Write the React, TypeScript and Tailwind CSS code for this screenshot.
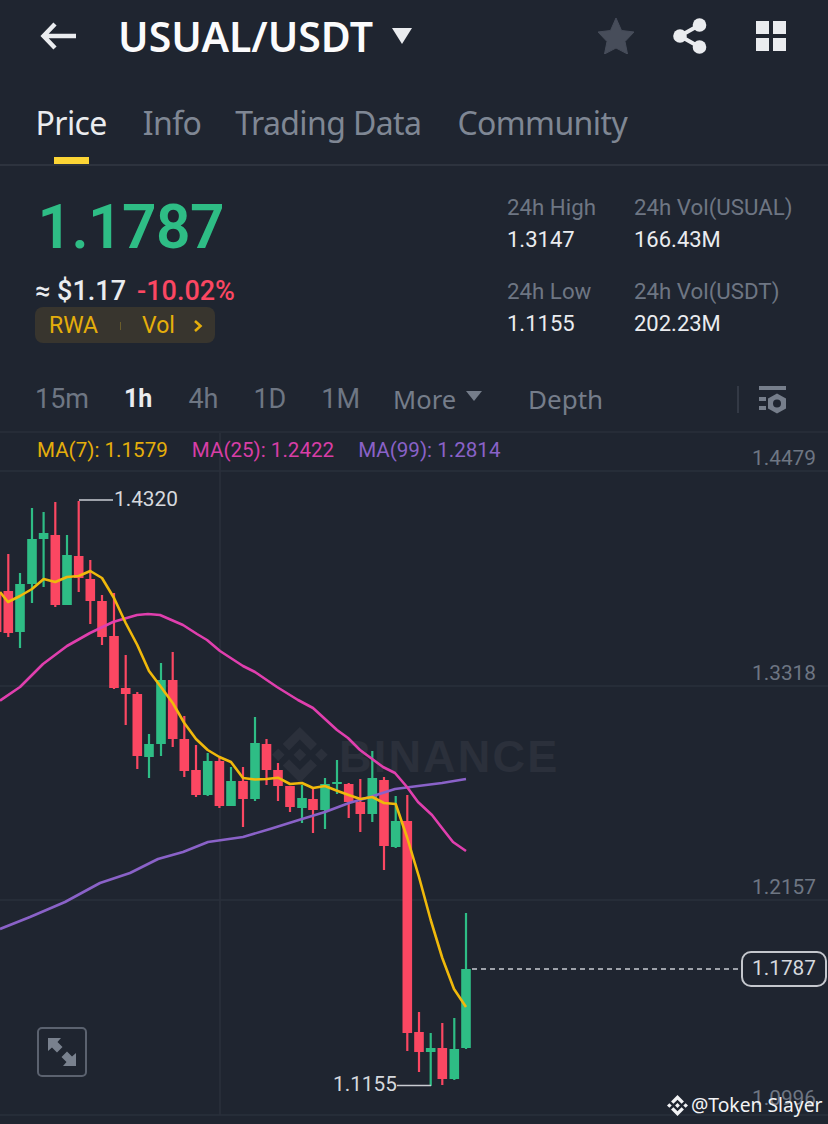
import React from 'react';

const GREEN = '#2ebd85';
const RED = '#fb4762';

// x, wick top, wick bottom, body top, body bottom, up
const candles: [number, number, number, number, number, boolean][] = [
  [-3.4, 560, 646, 592, 632, false],
  [8.3, 554, 637, 591, 633, false],
  [20, 573, 648, 584, 632, true],
  [32, 508, 603, 539, 584, true],
  [43.6, 512, 587, 533, 539, true],
  [55.3, 502, 607, 535, 605, false],
  [67, 535, 605, 555, 605, true],
  [78.7, 501, 592, 556, 578, false],
  [90.3, 560, 624, 579, 601, false],
  [102, 595, 645, 601, 637, false],
  [114, 593, 689, 636, 688, false],
  [125.7, 655, 725, 688, 694, false],
  [137.3, 692, 769, 694, 756, false],
  [149, 734, 778, 744, 757, true],
  [161, 663, 756, 680, 744, true],
  [172.7, 652, 747, 680, 739, false],
  [184.3, 716, 777, 739, 771, false],
  [196, 745, 797, 770, 795, false],
  [207.7, 753, 796, 761, 795, true],
  [219.4, 758, 808, 761, 806, false],
  [231, 767, 806, 781, 806, true],
  [243, 767, 827, 781, 799, false],
  [255, 717, 801, 743, 799, true],
  [266.5, 739, 785, 744, 770, false],
  [278, 763, 801, 770, 786, false],
  [290, 786, 812, 786, 807, false],
  [302, 785, 823, 798, 808, true],
  [313, 788, 833, 799, 810, false],
  [325, 778, 829, 784, 810, true],
  [337, 760, 794, 782, 784, true],
  [348.7, 783, 818, 784, 802, false],
  [360.3, 779, 832, 802, 814, false],
  [372.3, 751, 822, 778, 814, true],
  [384, 777, 870, 780, 846, false],
  [395.7, 796, 848, 821, 847, true],
  [407.3, 795, 1051, 821, 1033, false],
  [419, 1012, 1072, 1032, 1052, false],
  [430.7, 1033, 1086, 1048, 1052, true],
  [442.3, 1023, 1085, 1048, 1079, false],
  [454.3, 1018, 1080, 1049, 1079, true],
  [466, 913, 1049, 969, 1048, true],
];

const ma7 =
  '0,592 8,602 20,596 32,589 43.7,579 55.3,582 67,577 78.7,576 90.3,571 102,578 114,598 125.7,623 137.3,645 149,671 161,687 172.7,703 184.3,723 196,739 207.7,750 219.4,757 231,762 243,778 255,779.5 266.5,779 278,777.7 290,784 302,783 313,788 325,786 337,790.7 348.7,795 360.3,799 372.3,797 384,803 395.7,804 407.3,838 419,877 430.7,920 442.3,958 454,989 466,1007';
const ma25 =
  '0,700.7 20,687 43,664 67,646 90,633 113,622 137,615 148,614 160,615 183,625 197,634 207,640 220,651 243,666 255,672 277,687 298,700 313,708 337,730 348,738 360,750 383,767 395,773 407,787 418,802 432,815 442,828 453,842 466,851';
const ma99 =
  '0,929 30,917 65,902 100,883 130,873 158,859 183,852 208,842 243,837 270,829 302,819 325,812 349,803 370,797 395,789 418,786 442,783 466,779';

const BINANCE_PATH =
  'M38.73 53.2l24.59-24.58 24.6 24.6 14.3-14.31L63.32 0 24.42 38.9zM0 63.31l14.3-14.31 14.31 14.31-14.31 14.3zM38.73 73.41L63.32 98l24.6-24.6 14.31 14.29-38.9 38.91-38.91-38.88zM98 63.31l14.3-14.31 14.31 14.3-14.31 14.32zM77.83 63.3L63.32 48.78 52.59 59.51l-1.24 1.23-2.54 2.54 14.51 14.5 14.51-14.47z';

function Header() {
  return (
    <div className="flex h-[72px] items-center pl-[40px] pr-[42px] text-white">
      <svg width="36" height="30" viewBox="0 0 36 30" fill="none" stroke="#eaecef" strokeWidth="4.4" className="mr-[43px]">
        <path d="M36 15H4M15 3L3.5 15L15 27" />
      </svg>
      <span className="ml-[-1px] font-['Noto_Sans'] text-[41px] leading-none font-semibold text-[#fbfbfc]">USUAL/USDT</span>
      <svg width="22" height="16" viewBox="0 0 22 16" className="ml-[18px] mb-[1px]">
        <path d="M1 0H21L11 16Z" fill="#eaecef" />
      </svg>
      <svg width="36" height="36" viewBox="0 0 36 36" className="ml-auto">
        <path d="M18 0L23.5 12.5L36 14L27 23.5L29.5 36L18 30L6.5 36L9 23.5L0 14L12.5 12.5Z" fill="#474d5a" stroke="#474d5a" strokeLinejoin="round" />
      </svg>
      <svg width="34" height="36" viewBox="0 0 34 36" fill="#eaecef" className="ml-[39px]">
        <circle cx="26.5" cy="7" r="6.8" />
        <circle cx="7" cy="18" r="6.8" />
        <circle cx="26.5" cy="29" r="6.8" />
        <path d="M7 18L26.5 7M7 18L26.5 29" stroke="#eaecef" strokeWidth="4" />
      </svg>
      <div className="ml-[49px] grid grid-cols-2 gap-[3.5px]">
        <div className="h-[13.5px] w-[13.5px] bg-[#eaecef]" />
        <div className="h-[13.5px] w-[13.5px] bg-[#eaecef]" />
        <div className="h-[13.5px] w-[13.5px] bg-[#eaecef]" />
        <div className="h-[13.5px] w-[13.5px] bg-[#eaecef]" />
      </div>
    </div>
  );
}

function Tabs() {
  return (
    <div className="relative flex h-[94px] border-b-2 border-[#2d333e] pl-[35.5px] pt-[31px] font-['Noto_Sans'] text-[32px] leading-[40px] tracking-[-0.6px] text-[#7f8794]">
      <span className="text-[#eaecef]">Price</span>
      <span className="ml-[36px]">Info</span>
      <span className="ml-[34px]">Trading Data</span>
      <span className="ml-[36px]">Community</span>
      <div className="absolute bottom-0 left-[54px] h-[7px] w-[35px] bg-[#fcd535]" />
    </div>
  );
}

function Stat({ label, value }: { label: string; value: string }) {
  return (
    <div>
      <p className="text-[22.3px] leading-[34px] text-[#6e7683]">{label}</p>
      <p className="text-[22px] leading-[32px] text-[#eaecef]">{value}</p>
    </div>
  );
}

function Summary() {
  return (
    <div className="flex h-[201px] pl-[35px] font-['Roboto']">
      <div className="w-[472px]">
        <p className="mt-[26px] h-[72px] pl-[2.5px] text-[60.5px] leading-[72px] font-semibold tracking-[-0.6px] text-[#2ebd85]">1.1787</p>
        <div className="mt-[9px] flex h-[36px] items-center text-[27px] font-medium">
          <span className="text-[#eaecef]">≈ $1.17</span>
          <span className="ml-[11px] text-[#fb4762]">-10.02%</span>
        </div>
        <div className="mt-[-2px] flex h-[36px] w-[180px] items-center rounded-lg bg-[#38352e] pl-[14px] pt-[2px] text-[23px] text-[#e5ae0b]">
          <span>RWA</span>
          <div className="ml-[22px] h-[8px] w-[1px] bg-[#6b5d2a]" />
          <span className="ml-[21px]">Vol</span>
          <svg width="10" height="14" viewBox="0 0 10 14" fill="none" stroke="#e5ae0b" strokeWidth="2.6" className="ml-[18px]">
            <path d="M2 2L7.5 7L2 12" />
          </svg>
        </div>
      </div>
      <div className="mt-[24px] grid h-fit grid-cols-[127px_auto] gap-y-[18px]">
        <Stat label="24h High" value="1.3147" />
        <Stat label="24h Vol(USUAL)" value="166.43M" />
        <Stat label="24h Low" value="1.1155" />
        <Stat label="24h Vol(USDT)" value="202.23M" />
      </div>
    </div>
  );
}

function Timeframes() {
  return (
    <div className="flex h-[66px] items-center border-b-2 border-[#262c37] pl-[35px] font-['Roboto'] text-[27px] text-[#6e7683]">
      <span>15m</span>
      <span className="ml-[35px] text-[25px] font-bold text-[#eaecef]">1h</span>
      <span className="ml-[36px]">4h</span>
      <span className="ml-[35px]">1D</span>
      <span className="ml-[35px]">1M</span>
      <span className="ml-[33px] font-['Noto_Sans'] text-[25.5px] text-[#757d8a]">More</span>
      <svg width="16" height="10" viewBox="0 0 16 10" className="ml-[10px] mb-[6px]">
        <path d="M0 0H16L8 10Z" fill="#757d8a" />
      </svg>
      <span className="ml-[46px] font-['Noto_Sans'] text-[26px] text-[#757d8a]">Depth</span>
      <div className="ml-[134px] h-[27px] w-[2px] bg-[#333945]" />
      <svg width="29" height="29" viewBox="0 0 29 29" fill="#767e8b" className="ml-[19px]">
        <rect x="1" y="1" width="27" height="4" />
        <rect x="1" y="12" width="7" height="4" />
        <rect x="1" y="21" width="7" height="4" />
        <path fillRule="evenodd" d="M19 8.5L28 13.5V23.5L19 28.5L10 23.5V13.5ZM19 14.5A4 4 0 1 0 19 22.5A4 4 0 1 0 19 14.5Z" />
      </svg>
    </div>
  );
}

function Chart() {
  return (
    <div className="relative h-[691px] font-['Roboto'] text-[20.8px]">
      {/* viewBox keeps page coordinates so the chart data reads straight off the screenshot */}
      <svg width="828" height="691" viewBox="0 433 828 691" className="block">
        <g stroke="#2a303b" strokeWidth="1.6">
          <path d="M0 471H828M0 686H828M0 900H828M0 1115H828M220 433V1115" />
        </g>
        <g transform="translate(272 727) scale(0.44)">
          <path d={BINANCE_PATH} fill="#2b303b" />
        </g>
        <text x="339" y="772" fontFamily="Liberation Sans" fontWeight="700" fontSize="45" letterSpacing="2.2" fill="#2b303b">
          BINANCE
        </text>
        {candles.map(([x, wt, wb, bt, bb, up]) => (
          <g key={x} fill={up ? GREEN : RED}>
            <rect x={x - 1.1} y={wt} width="2.2" height={wb - wt} />
            <rect x={x - 4.8} y={bt} width="9.6" height={Math.max(bb - bt, 2)} />
          </g>
        ))}
        <polyline points={ma99} fill="none" stroke="#8a62c8" strokeWidth="2.6" strokeLinejoin="round" />
        <polyline points={ma25} fill="none" stroke="#e03fae" strokeWidth="2.6" strokeLinejoin="round" />
        <polyline points={ma7} fill="none" stroke="#f0b90b" strokeWidth="2.6" strokeLinejoin="round" />
        <path d="M79 500H113M397 1085.5H431" stroke="#c9ccd2" strokeWidth="1.4" fill="none" />
        <path d="M472 969H741" stroke="#c9ccd2" strokeWidth="1.4" strokeDasharray="5 4" fill="none" />
      </svg>

      <div className="absolute left-[37px] top-[2px] flex h-[30px] items-center text-[20.6px]">
        <span className="text-[#e5ae0b]">MA(7): 1.1579</span>
        <span className="ml-[24px] text-[#d83ea6]">MA(25): 1.2422</span>
        <span className="ml-[24px] text-[#8a62c8]">MA(99): 1.2814</span>
      </div>

      <span className="absolute right-[12px] top-[12px] leading-[26px] text-[#6e7683]">1.4479</span>
      <span className="absolute right-[12px] top-[227px] leading-[26px] text-[#6e7683]">1.3318</span>
      <span className="absolute right-[12px] top-[441px] leading-[26px] text-[#6e7683]">1.2157</span>
      <span className="absolute right-[12px] top-[652px] leading-[26px] text-[#6e7683]">1.0996</span>

      <span className="absolute left-[114px] top-[53px] leading-[26px] text-[#d6d9de]">1.4320</span>
      <span className="absolute left-[333px] top-[638px] leading-[26px] text-[#d6d9de]">1.1155</span>

      <div className="absolute left-[741px] top-[518px] flex h-[36px] w-[86px] items-center justify-center rounded-[10px] border-2 border-[#c4c7cd] bg-[#1f2530] text-[#d6d9de]">
        1.1787
      </div>

      <div className="absolute left-[37px] top-[594px] flex h-[50px] w-[50px] items-center justify-center rounded-[5px] border-2 border-[#5b626f]">
        <svg width="30" height="30" viewBox="0 0 30 30" fill="#79818e">
          <path d="M1 1H14L10.5 5L15.5 10L10 15.5L5 10.5L1 14Z" />
          <path d="M29 29H16L19.5 25L14.5 20L20 14.5L25 19.5L29 16Z" />
        </svg>
      </div>

      <div className="absolute left-[667px] top-[658px] flex items-center whitespace-nowrap text-[#f2f3f5]">
        <svg width="21" height="21" viewBox="0 0 126.61 126.61" fill="#f2f3f5" className="mr-[3px]">
          <path d={BINANCE_PATH} />
        </svg>
        <span className="font-['Noto_Sans'] text-[19.3px]">@Token Slayer</span>
      </div>
    </div>
  );
}

export default function App() {
  return (
    <div className="h-[1124px] w-[828px] overflow-hidden bg-[#1f2530]">
      <Header />
      <Tabs />
      <Summary />
      <Timeframes />
      <Chart />
    </div>
  );
}
